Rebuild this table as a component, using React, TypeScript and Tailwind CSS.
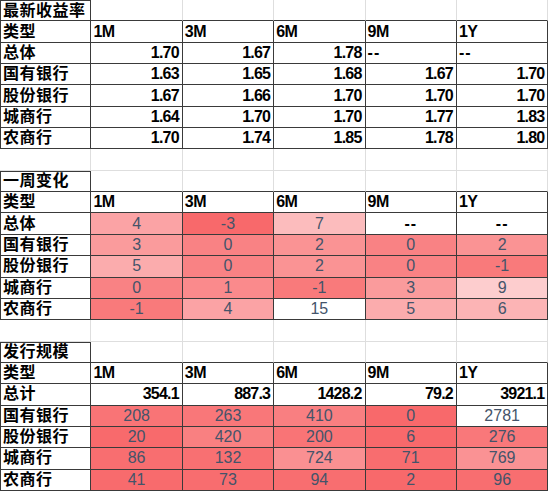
import React from 'react';

const cols = ['1M', '3M', '6M', '9M', '1Y'];

type Row = { name: string; vals: (number | string)[] };

const yieldRows: Row[] = [
  { name: '总体', vals: ['1.70', '1.67', '1.78', '--', '--'] },
  { name: '国有银行', vals: ['1.63', '1.65', '1.68', '1.67', '1.70'] },
  { name: '股份银行', vals: ['1.67', '1.66', '1.70', '1.70', '1.70'] },
  { name: '城商行', vals: ['1.64', '1.70', '1.70', '1.77', '1.83'] },
  { name: '农商行', vals: ['1.70', '1.74', '1.85', '1.78', '1.80'] },
];

const changeRows: Row[] = [
  { name: '总体', vals: [4, -3, 7, '--', '--'] },
  { name: '国有银行', vals: [3, 0, 2, 0, 2] },
  { name: '股份银行', vals: [5, 0, 2, 0, -1] },
  { name: '城商行', vals: [0, 1, -1, 3, 9] },
  { name: '农商行', vals: [-1, 4, 15, 5, 6] },
];

const totals = ['354.1', '887.3', '1428.2', '79.2', '3921.1'];

const issueRows: Row[] = [
  { name: '国有银行', vals: [208, 263, 410, 0, 2781] },
  { name: '股份银行', vals: [20, 420, 200, 6, 276] },
  { name: '城商行', vals: [86, 132, 724, 71, 769] },
  { name: '农商行', vals: [41, 73, 94, 2, 96] },
];

// red -> white colour scale, like the spreadsheet's conditional format
function heat(v: number, min: number, max: number) {
  const t = Math.max(0, Math.min(1, (v - min) / (max - min)));
  const r = Math.round(248 + (255 - 248) * t);
  const g = Math.round(105 + (255 - 105) * t);
  const b = Math.round(107 + (255 - 107) * t);
  return `rgb(${r},${g},${b})`;
}

const cjk = "font-['Liberation_Sans','Noto_Sans_CJK_SC',sans-serif]";
const dark = 'border-r border-b border-[#3a3a3a]';
const light = 'border-r border-b border-[#dedede]';

function Label({ text }: { text: string }) {
  return (
    <div className={`${dark} border-l flex items-center pl-[2px] font-bold text-[16px] text-black tracking-[0.5px] overflow-hidden whitespace-nowrap`}>
      {text}
    </div>
  );
}

function Empty({ bottomDark }: { bottomDark?: boolean }) {
  return <div className={bottomDark ? 'border-r border-b border-r-[#dedede] border-b-[#3a3a3a]' : light} />;
}

function Title({ text }: { text: string }) {
  return (
    <>
      <div className={`${dark} border-l border-t flex items-center pl-[2px] font-bold text-[16px] tracking-[0.5px] whitespace-nowrap`}>
        {text}
      </div>
      {cols.map((c) => (
        <Empty key={c} bottomDark />
      ))}
    </>
  );
}

function Header() {
  return (
    <>
      <Label text="类型" />
      {cols.map((c) => (
        <div key={c} className={`${dark} flex items-center pl-[2px] font-bold text-[16px] tracking-[-0.5px]`}>
          {c}
        </div>
      ))}
    </>
  );
}

function Gap() {
  return (
    <>
      {[0, 1, 2, 3, 4, 5].map((i) => (
        <Empty key={i} />
      ))}
    </>
  );
}

export default function App() {
  return (
    <div className={`w-[550px] h-[491px] bg-white overflow-hidden ${cjk}`}>
      <div className="grid grid-cols-[repeat(6,91.4px)] grid-rows-[repeat(23,minmax(0,1fr))] h-[491px]">
        {/* 最新收益率 */}
        <Title text="最新收益率" />
        <Header />
        {yieldRows.map((r) => (
          <React.Fragment key={r.name}>
            <Label text={r.name} />
            {r.vals.map((v, i) =>
              v === '--' ? (
                <div key={i} className={`${dark} flex items-center pl-[2px] font-bold text-[16px] tracking-[1px]`}>
                  --
                </div>
              ) : (
                <div key={i} className={`${dark} flex items-center justify-end pr-[3px] font-bold text-[16px] tracking-[-0.8px]`}>
                  {v}
                </div>
              )
            )}
          </React.Fragment>
        ))}
        <Gap />

        {/* 一周变化 */}
        <Title text="一周变化" />
        <Header />
        {changeRows.map((r) => (
          <React.Fragment key={r.name}>
            <Label text={r.name} />
            {r.vals.map((v, i) =>
              typeof v === 'string' ? (
                <div key={i} className={`${dark} flex items-center justify-center font-bold text-[16px] text-black tracking-[1px]`}>
                  --
                </div>
              ) : (
                <div
                  key={i}
                  className={`${dark} flex items-center justify-center text-[16px] text-[#44546a]`}
                  style={{ backgroundColor: heat(v, -3, 15) }}
                >
                  {v}
                </div>
              )
            )}
          </React.Fragment>
        ))}
        <Gap />

        {/* 发行规模 */}
        <Title text="发行规模" />
        <Header />
        <Label text="总计" />
        {totals.map((t, i) => (
          <div key={i} className={`${dark} flex items-center justify-end pr-[3px] font-bold text-[16px] tracking-[-0.8px]`}>
            {t}
          </div>
        ))}
        {issueRows.map((r) => (
          <React.Fragment key={r.name}>
            <Label text={r.name} />
            {r.vals.map((v, i) => (
              <div
                key={i}
                className={`${dark} flex items-center justify-center text-[16px] text-[#44546a]`}
                style={{ backgroundColor: heat(v as number, 0, 2781) }}
              >
                {v}
              </div>
            ))}
          </React.Fragment>
        ))}
      </div>
    </div>
  );
}
